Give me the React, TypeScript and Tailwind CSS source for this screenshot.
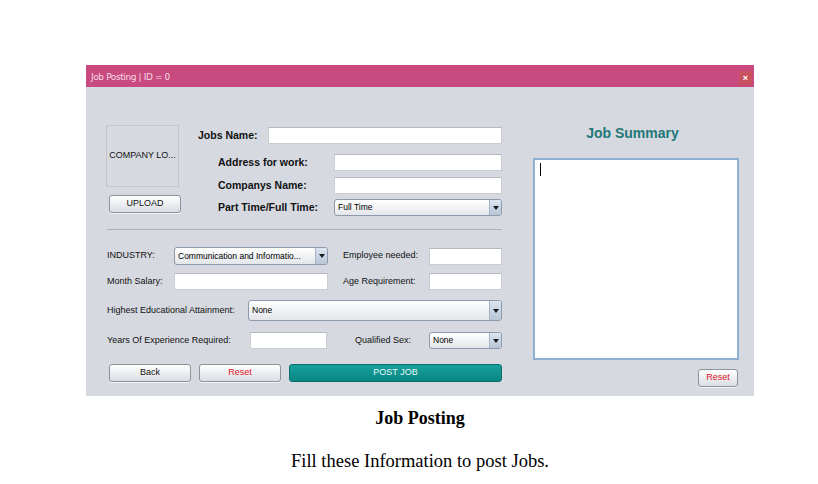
const field = "h-[17px] bg-white border border-[#c9ccd2] border-t-[#b4b8bf]";
const btn =
  "h-[18px] rounded-[3px] border border-[#8e939b] bg-gradient-to-b from-[#ffffff] to-[#dadde2] text-[9px] flex items-center justify-center shadow-[0_1px_0_#f4f5f7]";

function Combo({ value, className }: { value: string; className: string }) {
  return (
    <div
      className={`flex items-stretch rounded-[3px] border border-[#8d9aab] bg-gradient-to-b from-[#ffffff] to-[#e3e6ea] ${className}`}
    >
      <div className="flex-1 flex items-center pl-[3px] text-[8.5px] text-black overflow-hidden whitespace-nowrap">
        {value}
      </div>
      <div className="w-[12px] flex items-center justify-center border-l border-[#a9b4c2] bg-gradient-to-b from-[#dbe5f0] to-[#b7c6d6] rounded-r-[2px]">
        <svg width="6" height="4" viewBox="0 0 6 4">
          <path d="M0 0h6L3 4z" fill="#1a1a1a" />
        </svg>
      </div>
    </div>
  );
}

export default function App() {
  return (
    <div className="w-[818px] h-[484px] bg-white pt-[65px] font-['Liberation_Sans',Arial,sans-serif]">
      <div className="ml-[86px] w-[668px]">
        <div className="h-[22px] bg-[#c94a7e] flex items-center justify-between pl-[5px] pr-[2px]">
          <span className="pt-[3px] text-[9px] text-[#f6dbe7] font-['DejaVu_Sans',sans-serif] tracking-[-0.4px]">
            Job Posting | ID = 0
          </span>
          <div className="mt-[4px] w-[13px] h-[14px] bg-[#c9505e] flex items-center justify-center text-[9px] font-bold text-white leading-none">
            ×
          </div>
        </div>
        <div className="h-[309px] bg-[#d6d9e0] flex">
          {/* left form */}
          <div className="w-[416px] pl-[20px] pt-[38px]">
            <div className="flex">
              <div className="w-[92px] flex flex-col">
                <div className="w-[73px] h-[62px] border border-[#c3c6cc] flex items-center justify-center text-[9px] text-[#111]">
                  COMPANY LO...
                </div>
                <div className={`${btn} w-[72px] ml-[3px] mt-[8px] text-[#111]`}>UPLOAD</div>
              </div>
              <div className="flex-1 pt-[2px] text-[10.5px] font-bold text-[#111]">
                <div className="flex items-center h-[17px]">
                  <span className="w-[70px]">Jobs Name:</span>
                  <div className={`${field} w-[234px]`} />
                </div>
                <div className="flex items-center h-[17px] mt-[10px] pl-[20px]">
                  <span className="w-[116px]">Address for work:</span>
                  <div className={`${field} w-[168px]`} />
                </div>
                <div className="flex items-center h-[17px] mt-[6px] pl-[20px]">
                  <span className="w-[116px]">Companys Name:</span>
                  <div className={`${field} w-[168px]`} />
                </div>
                <div className="flex items-center h-[17px] mt-[5px] pl-[20px]">
                  <span className="w-[116px]">Part Time/Full Time:</span>
                  <Combo value="Full Time" className="w-[168px] h-[17px] font-normal" />
                </div>
              </div>
            </div>
            <div className="mt-[13px] ml-[1px] w-[395px] h-px bg-[#aeb2b9]" />
            <div className="text-[9px] text-[#111] pl-[1px]">
              <div className="flex items-center mt-[17px] h-[18px]">
                <span className="w-[67px]">INDUSTRY:</span>
                <Combo value="Communication and Informatio..." className="w-[154px] h-[18px]" />
                <span className="w-[86px] ml-[15px]">Employee needed:</span>
                <div className={`${field} w-[73px]`} />
              </div>
              <div className="flex items-center mt-[8px] h-[17px]">
                <span className="w-[67px]">Month Salary:</span>
                <div className={`${field} w-[154px]`} />
                <span className="w-[86px] ml-[15px]">Age Requirement:</span>
                <div className={`${field} w-[73px]`} />
              </div>
              <div className="flex items-center mt-[10px] h-[21px]">
                <span className="w-[141px]">Highest Educational Attainment:</span>
                <Combo value="None" className="w-[254px] h-[21px]" />
              </div>
              <div className="flex items-center mt-[11px] h-[17px]">
                <span className="w-[143px]">Years Of Experience Required:</span>
                <div className={`${field} w-[77px]`} />
                <span className="w-[74px] ml-[28px]">Qualified Sex:</span>
                <Combo value="None" className="w-[73px] h-[17px]" />
              </div>
              <div className="flex mt-[15px] ml-[2px] gap-[8px]">
                <div className={`${btn} w-[82px] text-[#111]`}>Back</div>
                <div className={`${btn} w-[82px] text-[#e0141e]`}>Reset</div>
                <div className="w-[213px] h-[18px] rounded-[3px] border border-[#0b6f6d] bg-gradient-to-b from-[#16a09d] to-[#0a8683] text-[9px] text-[#e8f8f7] flex items-center justify-center">
                  POST JOB
                </div>
              </div>
            </div>
          </div>
          {/* right summary */}
          <div className="flex-1 pl-[31px] pt-[37px]">
            <div className="w-[199px] text-center text-[14px] font-bold text-[#1f7878] leading-[18px]">
              Job Summary
            </div>
            <div className="mt-[16px] w-[206px] h-[202px] bg-white border-2 border-[#8eb0d0] pl-[5px] pt-[3px]">
              <div className="w-px h-[13px] bg-black" />
            </div>
            <div className="flex justify-end w-[206px] mt-[9px]">
              <div className={`${btn} w-[40px] h-[17px] text-[#e0141e] mr-[1px]`}>Reset</div>
            </div>
          </div>
        </div>
      </div>
      <div className="mt-[11px] pl-[22px] text-center font-['Liberation_Serif',serif] text-black">
        <div className="text-[18px] font-bold leading-[22px]">Job Posting</div>
        <div className="mt-[21px] text-[18.5px] leading-[22px]">Fill these Information to post Jobs.</div>
      </div>
    </div>
  );
}
